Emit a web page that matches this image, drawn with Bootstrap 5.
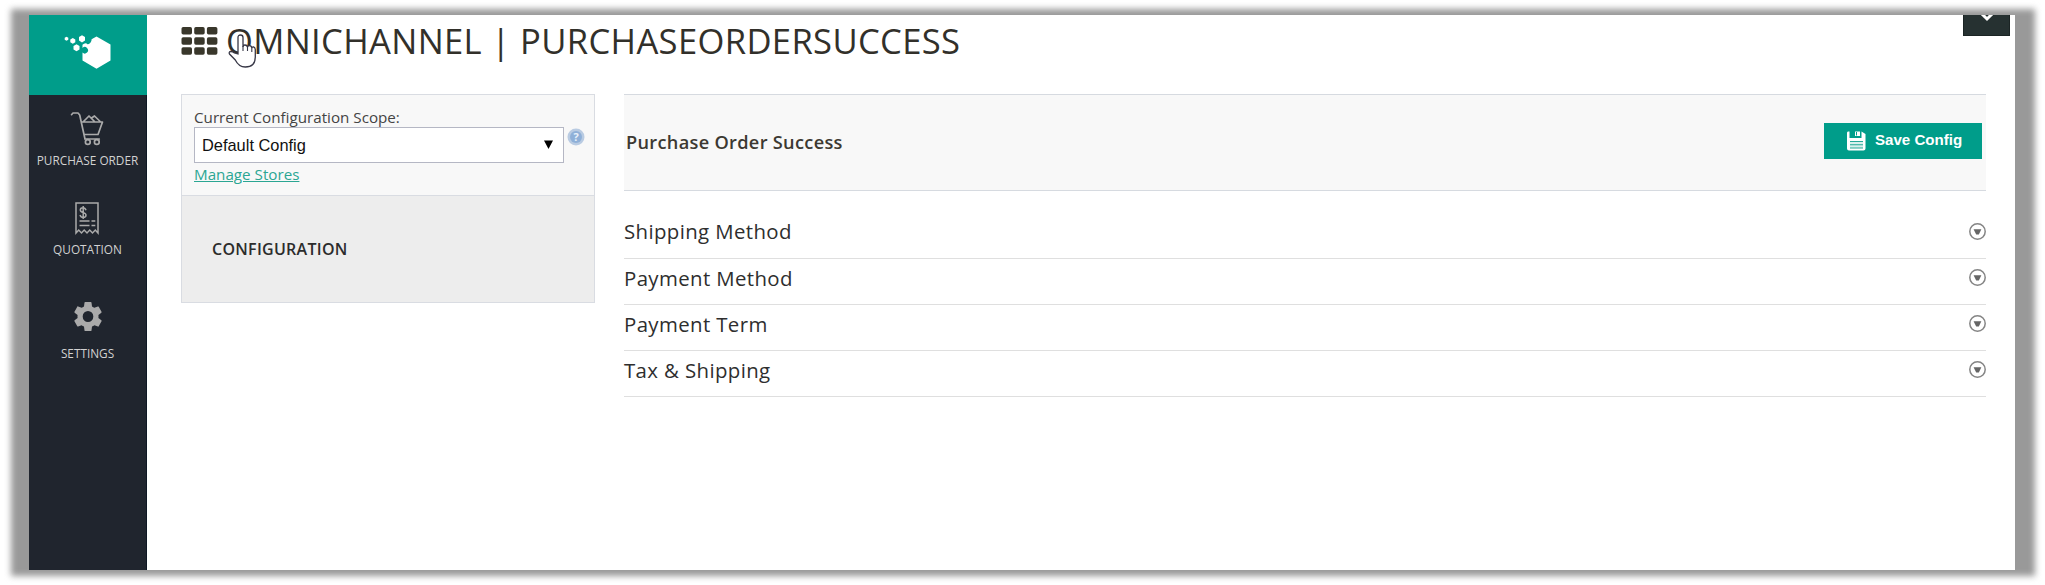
<!DOCTYPE html>
<html lang="en">
<head>
<meta charset="utf-8">
<title>Omnichannel | PurchaseOrderSuccess</title>
<link href="https://cdn.jsdelivr.net/npm/bootstrap@5.3.0/dist/css/bootstrap.min.css" rel="stylesheet">
<style>
body{font-family:"Open Sans",sans-serif;background:#fff;color:#333;overflow:hidden}
.stage{width:2045px;height:585px;padding:15px 30px 15px 29px;isolation:isolate}
.stage::before{content:"";position:absolute;z-index:-1;inset:9px 10px 9px 11px;background:#999;filter:blur(3px)}
.app-window{height:555px;background:#fff}
.side{width:118px;background:#20252e;border-right:1px solid #0d1724}
.brand{height:80px;width:118px;background:#009d8a;padding:20px 0 0 35px}
.side a{color:#d2d2d2;font-size:11.8px;line-height:16px;text-decoration:none;white-space:nowrap}
.side svg,.content svg{display:block;flex:none}
.purchase{margin:5px 0 33px}
.quote{margin-top:6px}
.gear{margin-top:45px}
.gear-label{margin-top:14px}
.content{padding:0 29px 0 34px}
.topbar{height:79px;padding-top:3px}
.topbar h1{font-size:34.6px;letter-spacing:.35px;line-height:46px;color:#32302a;margin:0 0 0 8px;white-space:nowrap}
.apps{margin-top:9px}
.tab{width:47px;height:21px;background:#263131;border:1px solid #1b2424;border-top:0;margin:-3px -24px 0 auto}
.hand{left:227px;top:34px}
.scope{width:414px;height:209px;background:#ededed;border:1px solid #d9dce2}
.scope-top{height:101px;background:#f8f8f8;border-bottom:1px solid #d9dce2;padding:12px 9px 0 12px;font-size:15.2px;line-height:20px;color:#444}
.picker{width:370px;height:36px;border:1px solid #b5b7c4;background:#fff;color:#111;font:16.4px/20px "Liberation Sans",sans-serif;padding:0 10px 1px 7px}
.help{margin-top:1px}
.scope-top a{color:#2ba693;margin-top:1px}
.conf{font-size:16px;letter-spacing:.28px;font-weight:600;color:#2c2c2c;padding:41px 0 0 30px;line-height:24px}
.settings-col{margin-left:29px}
.head{height:97px;background:#f8f8f8;border-top:1px solid #d6dae0;border-bottom:1px solid #d6dae0;padding:0 4px 0 2px}
.head h2{font-size:18.2px;letter-spacing:.3px;font-weight:600;margin:0;color:#3c3932}
.save{width:158px;height:36px;background:#009d8a;color:#fff;font:bold 15.1px/20px "Liberation Sans",sans-serif;border-radius:0;padding:0 0 0 22px;margin-top:-3px}
.save-label{margin:-2px 0 0 9px}
.rows{padding-top:22px}
.section-row{height:46px;border-bottom:1px solid #dfdfdf;font-size:20.4px;letter-spacing:.38px;line-height:28px;color:#2e2e2e;padding-bottom:8px}
.section-row:first-child{padding-bottom:9px}
</style>
<script src="https://cdn.jsdelivr.net/npm/bootstrap@5.3.0/dist/js/bootstrap.bundle.min.js"></script>
</head>
<body>
<svg class="position-absolute" width="0" height="0"><defs>
<g id="chev"><circle cx="8.5" cy="8.5" r="7.7" fill="#fff" stroke="#858585" stroke-width="1.5"/><path d="M4.600 6.300h7.800L9.800 11.600H7.200z" fill="#666"/></g>
</defs></svg>
<div class="stage position-relative">
 <div class="app-window d-flex">
  <nav class="side d-flex flex-column align-items-center flex-shrink-0">
   <div class="brand"><svg width="50" height="36" viewBox="0 0 50 36" fill="#fff"><path d="M32.500 1.500 46.500 9.500v16L32.500 33.700 18.500 25.500V17.500A3.200 3.200 0 1 0 18.500 13V9.800L20 8.800Q22 7.500 23.500 9.200 26 9.500 27.500 5.500Q27 4.500 28 4z"/><path d="M18 .3 21 2v3.600L18 7.400 15 5.600V2zM8.800 3 11.300 4.400v2.900L8.800 8.700 6.300 7.300V4.400zM12.500 9.200 15.500 11v3.500L12.500 16.200 9.500 14.500V11zM2.500 1.800 4.300 2.800v2L2.500 5.800.7 4.800v-2z"/></svg></div>
   <a href="#" class="d-flex flex-column align-items-center"><svg class="mt-3" width="34" height="36" viewBox="0 0 34 36" fill="none" stroke="#aaa" stroke-width="1.7" stroke-linejoin="round" stroke-linecap="round"><path d="M1.500 3.700 3 2h5l1.700 2L15 28M12 11h20.500l-4.500 12.500H14.300M14.800 28h14.500M13.500 10.500 19 5l5.500 5.500M21.500 7l3-2 5.700 5.500"/><circle cx="17.800" cy="31" r="2.400"/><circle cx="26.800" cy="31" r="2.400"/></svg><span class="purchase">PURCHASE ORDER</span></a>
   <a href="#" class="d-flex flex-column align-items-center"><svg width="26" height="34" viewBox="0 0 26 34" fill="none" stroke="#aaa" stroke-width="1.5"><path d="M2 32V2h22v30l-2.700-3-2.800 3-2.800-3-2.700 3-2.800-3-2.700 3-2.800-3z"/><path d="M5.500 20h10M5.500 24.500h10M17.500 20h3.800M17.500 24.500h3.800" /><path d="M12 9.200C11 5.800 6.300 6 6.300 9c0 3.200 5.700 2 5.700 5 0 3.200-5 3.200-6 0M9.200 5v13"/></svg><span class="quote">QUOTATION</span></a>
   <a href="#" class="d-flex flex-column align-items-center"><svg class="gear" width="28" height="29" viewBox="2 2 20 20" preserveAspectRatio="none" fill="#aaa"><path d="M19.430 12.980c.04-.32.07-.64.07-.98s-.03-.66-.07-.98l2.110-1.650c.19-.15.24-.42.12-.64l-2-3.460c-.12-.22-.39-.3-.61-.22l-2.490 1c-.52-.4-1.080-.73-1.690-.98l-.38-2.650A.49.490 0 0 0 14 2h-4c-.25 0-.46.180-.49.420l-.38 2.650c-.61.25-1.170.59-1.690.98l-2.490-1c-.23-.09-.49 0-.61.22l-2 3.460c-.13.22-.07.49.12.640l2.110 1.650c-.04.320-.07.650-.07.980s.03.660.07.980l-2.110 1.650c-.19.150-.24.420-.12.640l2 3.460c.12.220.39.300.61.220l2.490-1c.52.400 1.080.730 1.690.980l.38 2.650c.03.240.24.420.49.420h4c.25 0 .46-.180.49-.420l.38-2.650c.61-.250 1.170-.590 1.690-.980l2.490 1c.23.090.49 0 .61-.220l2-3.460c.12-.220.07-.490-.12-.640zM12 15.800a3.800 3.800 0 1 1 0-7.600 3.800 3.800 0 0 1 0 7.600z"/></svg><span class="gear-label">SETTINGS</span></a>
  </nav>
  <main class="content flex-grow-1">
   <header class="topbar d-flex align-items-start">
    <svg class="apps" width="37" height="29" viewBox="0 0 37 29" fill="#39372b"><g id="dots"><rect x=".5" y="0" width="10.500" height="7.500" rx="1.700"/><rect x="13.200" y="0" width="10.500" height="7.500" rx="1.700"/><rect x="25.900" y="0" width="10.500" height="7.500" rx="1.700"/></g><use href="#dots" y="10.200"/><use href="#dots" y="20.300"/></svg>
    <h1 class="fw-normal">OMNICHANNEL | PURCHASEORDERSUCCESS</h1>
    <div class="tab d-flex justify-content-center"><svg width="14" height="7" viewBox="0 0 14 7"><path d="M1-2 7 4l6-6" fill="none" stroke="#fff" stroke-width="3"/></svg></div>
   </header>
   <div class="d-flex align-items-start">
    <aside class="scope flex-shrink-0">
     <div class="scope-top">
      <div>Current Configuration Scope:</div>
      <div class="d-flex justify-content-between">
       <div class="picker d-flex align-items-center justify-content-between"><span>Default Config</span><svg width="9" height="9" viewBox="0 0 9 9"><path d="M0 .5h9L4.500 9z"/></svg></div>
       <svg class="help" width="18" height="18" viewBox="0 0 18 18"><circle cx="9" cy="9" r="8.500" fill="#b9cbe2"/><circle cx="9" cy="9" r="6" fill="#8fb0d8"/><text x="9" y="13" text-anchor="middle" font-family="Open Sans" font-weight="700" font-size="11" fill="#e8f0fa">?</text></svg>
      </div>
      <a href="#" class="d-inline-block">Manage Stores</a>
     </div>
     <div class="conf">CONFIGURATION</div>
    </aside>
    <section class="flex-grow-1 settings-col">
     <div class="head d-flex justify-content-between align-items-center">
      <h2>Purchase Order Success</h2>
      <button class="save btn d-flex align-items-center"><svg width="19" height="20" viewBox="0 0 19 20"><path fill="#fff" d="M0 2Q0 .5 1 .5h1.500V7h12V.5L18.500 3v14.500q0 2-2 2H2q-2 0-2-2zM8 .5h5V5H8z"/><path d="M9.500 1v3.500" stroke="#009d8a" stroke-width="1"/><path d="M3 10.500h13v6.500H3z" fill="#d8f0ed"/><path d="M3 10.500h13M3 13.700h13M3 17h13" stroke="#26a998" stroke-width="1.100"/></svg><span class="save-label">Save Config</span></button>
     </div>
     <div class="rows">
      <div class="section-row d-flex justify-content-between align-items-center"><span>Shipping Method</span><svg width="17" height="17"><use href="#chev"/></svg></div>
      <div class="section-row d-flex justify-content-between align-items-center"><span>Payment Method</span><svg width="17" height="17"><use href="#chev"/></svg></div>
      <div class="section-row d-flex justify-content-between align-items-center"><span>Payment Term</span><svg width="17" height="17"><use href="#chev"/></svg></div>
      <div class="section-row d-flex justify-content-between align-items-center"><span>Tax &amp; Shipping</span><svg width="17" height="17"><use href="#chev"/></svg></div>
     </div>
    </section>
   </div>
  </main>
 </div>
 <!-- Pointer resting over the page title -->
 <svg class="hand position-absolute" width="30" height="35" viewBox="0 0 30 35"><path d="M11 20V3.500q0-2.500 2.500-2.500T16 3.500V13q0-2 2-2t2.500 2q.3-1.300 2-1.300 2 0 2.300 2.300.3-1.200 1.800-1 1.500.3 1.700 2.500V23q0 10-10 10-6.500 0-10-7L2.500 20Q1.500 18 3.500 17.500q2-.2 4 1.500z" fill="#fff" stroke="#373746" stroke-width="1.300"/><path d="M16 12v5M20.500 13v4M24.800 14v4" stroke="#373746" stroke-width="1.100"/></svg>
</div>
</body>
</html>
